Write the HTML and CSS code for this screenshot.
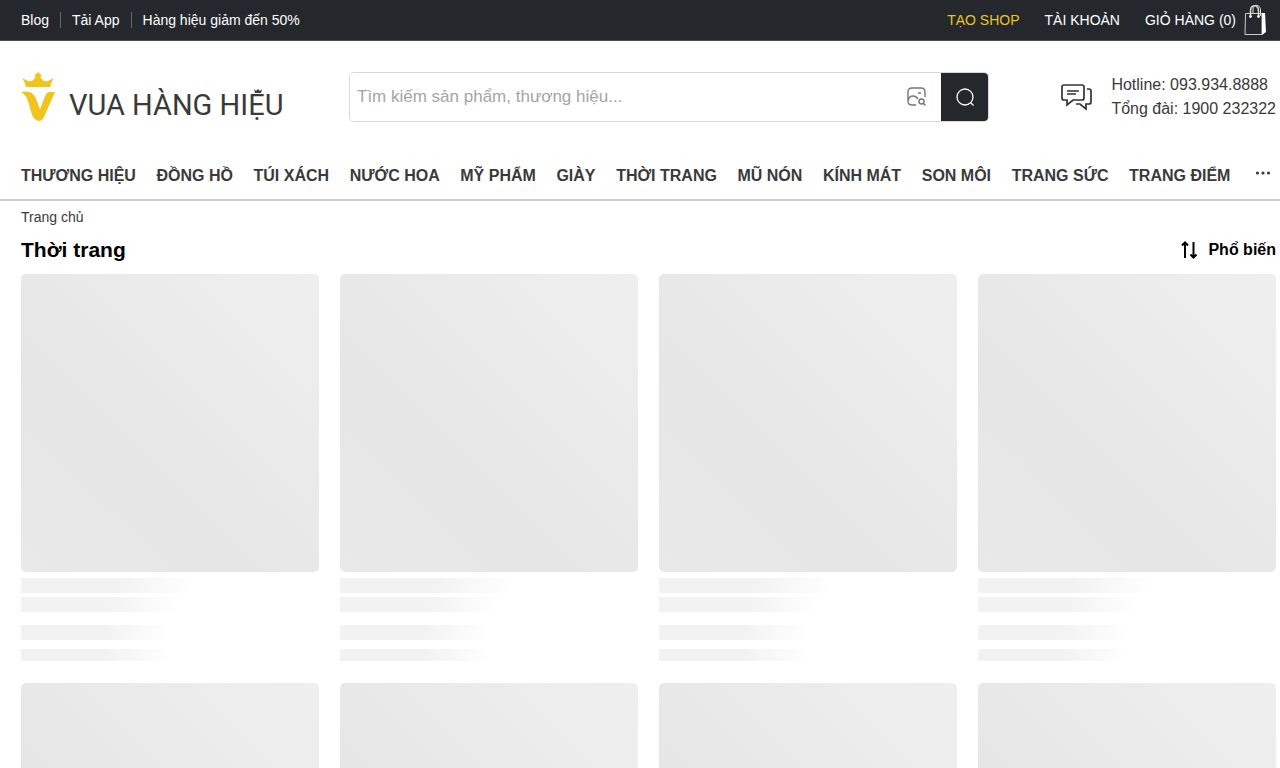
FILE: index.html
```html
<!DOCTYPE html>
<html lang="vi">
<head>
    <meta charset="UTF-8">
    <title>Thời trang - Vua Hàng Hiệu</title>
    <link rel="stylesheet" href="styles.css">
</head>
<body>

<div class="topbar">
    <div class="top-left">
        <a href="#">Blog</a>
        <a href="#">Tải App</a>
        <a href="#">Hàng hiệu giảm đến 50%</a>
    </div>
    <div class="top-right">
        <a href="#" class="shop">TẠO SHOP</a>
        <a href="#">TÀI KHOẢN</a>
        <a href="#" class="cart">GIỎ HÀNG (0)
            <svg width="23" height="32" viewBox="0 0 23 32" fill="none" stroke="#fff">
                <path d="M1.500 9.500H18V30.500H1Z" stroke="#ccc"/>
                <path d="M18 9H21L22 28L18 31Z" fill="#fff" stroke="none"/>
                <path d="M6.500 12V7C6.500 0 14.500 0 14.500 7V12" stroke="#ddd" stroke-width="1.500"/>
                <path d="M9 9V5C9 0 16.500 0 16.500 6V12" stroke="#ddd"/>
                <circle cx="6.500" cy="12.500" r="1" fill="#fff"/>
                <circle cx="14.500" cy="12.500" r="1" fill="#fff"/>
            </svg>
        </a>
    </div>
</div>

<header class="header">
    <a href="#" class="logo">
        <svg width="34" height="50" viewBox="0 0 34 50" fill="#efc51d">
            <path d="M1 6L7 9Q11 10 13 7L15 5L13 4L17 0L21 4L19 5L21 7Q23 10 27 9L33 6Q30 10 29 15H5Q4 10 1 6Z"/>
            <path d="M0 20Q4 19 8 20Q13 21 15 27L19 37L25 22Q26 20 29 20H34L23 45Q21 49 18 49Q13 48 11 43L7 29Q5 23 0 20Z"/>
        </svg>
        <span class="brand">VUA HÀNG HI<span class="crown-e">Ẹ<svg width="8" height="5" viewBox="0 0 8 5" fill="#3a3a3a"><path d="M0 0L2 2L4 0L6 2L8 0L7 4H1Z"/></svg></span>U</span>
    </a>
    <form class="search">
        <input type="text" aria-label="Tìm kiếm" placeholder="Tìm kiếm sản phẩm, thương hiệu...">
        <button type="button" class="by-image" aria-label="Tìm bằng hình ảnh">
            <svg width="20" height="20" viewBox="0 0 20 20" fill="none" stroke="#777" stroke-width="1.400">
                <path d="M9 18H5Q1 18 1 14V5Q1 1 5 1H14Q18 1 18 5V10M1 14Q2 9 6 9Q9 9 11 12M11 6H14"/>
                <circle cx="14.500" cy="14.500" r="2.500"/>
                <path d="M16.500 16.500L18.500 18.500"/>
            </svg>
        </button>
        <button type="submit" class="go" aria-label="Tìm">
            <svg width="20" height="20" viewBox="0 0 20 20" fill="none" stroke="#fff" stroke-width="1.300">
                <circle cx="10" cy="10" r="8"/>
                <path d="M15.500 15.500L18.500 18.500"/>
            </svg>
        </button>
    </form>
    <div class="contact">
        <svg width="31" height="28" viewBox="0 0 31 28" fill="none" stroke="#333" stroke-width="1.700">
            <path d="M3 2H21Q23 2 23 4V15Q23 17 21 17H12L6 22V17H3Q1 17 1 15V4Q1 2 3 2Z"/>
            <path d="M6 8H18M6 11H15"/>
            <path d="M26 6H28Q30 6 30 8V19Q30 21 28 21H25V26L19 21H15"/>
        </svg>
        <div>
            <a href="#">Hotline: 093.934.8888</a>
            <a href="#">Tổng đài: 1900 232322</a>
        </div>
    </div>
</header>

<nav class="menu">
    <a href="#">THƯƠNG HIỆU</a>
    <a href="#">ĐỒNG HỒ</a>
    <a href="#">TÚI XÁCH</a>
    <a href="#">NƯỚC HOA</a>
    <a href="#">MỸ PHẨM</a>
    <a href="#">GIÀY</a>
    <a href="#">THỜI TRANG</a>
    <a href="#">MŨ NÓN</a>
    <a href="#">KÍNH MÁT</a>
    <a href="#">SON MÔI</a>
    <a href="#">TRANG SỨC</a>
    <a href="#">TRANG ĐIỂM</a>
    <button type="button" class="more" aria-label="Xem thêm">
        <svg width="16" height="4" viewBox="0 0 16 4" fill="#3a3a3a"><circle cx="2.500" cy="2" r="1.600"/><circle cx="8" cy="2" r="1.600"/><circle cx="13.500" cy="2" r="1.600"/></svg>
    </button>
</nav>

<main class="content">
    <a href="#" class="crumb">Trang chủ</a>
    <div class="heading">
        <h1>Thời trang</h1>
        <button type="button" class="sort">
            <svg width="17" height="18" viewBox="0 0 17 18" fill="none" stroke="#000" stroke-width="2">
                <path d="M4 17V1M1 4.500L4 1.500L7 4.500"/>
                <path d="M12.500 1V17M9.500 13.500L12.500 16.500L15.500 13.500"/>
            </svg>
            Phổ biến
        </button>
    </div>
    <div class="grid">
        <div class="card"><div class="thumb"></div><div class="line"></div><div class="line second"></div><div class="line price"></div><div class="line small"></div></div>
        <div class="card"><div class="thumb"></div><div class="line"></div><div class="line second"></div><div class="line price"></div><div class="line small"></div></div>
        <div class="card"><div class="thumb"></div><div class="line"></div><div class="line second"></div><div class="line price"></div><div class="line small"></div></div>
        <div class="card"><div class="thumb"></div><div class="line"></div><div class="line second"></div><div class="line price"></div><div class="line small"></div></div>
        <div class="card"><div class="thumb"></div></div>
        <div class="card"><div class="thumb"></div></div>
        <div class="card"><div class="thumb"></div></div>
        <div class="card"><div class="thumb"></div></div>
    </div>
</main>

</body>
</html>
```
FILE: styles.css
```css
*{box-sizing:border-box;}

html{scrollbar-width:none;}

body{margin:0;font-family:"Liberation Sans",Arial,sans-serif;color:#3a3a3a;background:#fff;}

a{color:inherit;text-decoration:none;}

button{border:0;padding:0;background:none;font:inherit;color:inherit;cursor:pointer;}

svg{display:block;flex:none;}

/* top bar */
.topbar{display:flex;justify-content:space-between;align-items:center;height:41px;padding:0 13px 0 21px;
    background:#24282d;border-bottom:1px solid #4a4d50;color:#fff;font-size:14px;}
.top-left{display:flex;}
.top-left a{padding-right:11px;line-height:16px;}
.top-left a + a{border-left:1px solid #66696c;padding-left:11px;}
.top-right{display:flex;align-items:center;gap:25px;}
.shop{color:#efc51d;}
.cart{display:flex;align-items:center;gap:8px;}

/* header */
.header{display:flex;align-items:center;height:111px;padding:0 4px 0 21px;}
.logo{display:flex;align-items:center;gap:14px;width:328px;}
.brand{font-family:Roboto,sans-serif;font-size:29px;line-height:36px;padding-top:16px;white-space:nowrap;}
.crown-e{position:relative;}
.crown-e svg{position:absolute;left:6px;top:1px;}
.search{display:flex;flex:1;max-width:640px;height:50px;border:1px solid #d8d8d8;border-radius:5px;overflow:hidden;}
.search input{flex:1;min-width:0;border:0;padding:0 7px;outline:0;font:17px "Liberation Sans",Arial,sans-serif;}
.search input::placeholder{color:#a5a5a5;}
.by-image{padding:0 14px;}
.go{display:flex;align-items:center;justify-content:center;width:47px;background:#24282d;}
.contact{display:flex;align-items:center;gap:19px;margin-left:auto;font-size:16px;line-height:24px;white-space:nowrap;}
.contact a{display:block;}

/* menu */
.menu{display:flex;align-items:center;justify-content:space-between;height:49px;padding:0 9px 0 21px;
    border-bottom:2px solid #ccc;font-size:16px;font-weight:bold;white-space:nowrap;}
.more{padding:0 0 6px 4px;}

/* product list */
.content{padding:8px 4px 0 21px;}
.crumb{display:block;font-size:14px;line-height:16px;}
.heading{display:flex;align-items:center;justify-content:space-between;height:49px;color:#000;}
.heading h1{margin:0;font-size:21px;}
.sort{display:flex;align-items:center;gap:10px;font-size:16px;font-weight:bold;}
.grid{display:grid;grid-template-columns:repeat(4,1fr);gap:22px 21px;}
.thumb{aspect-ratio:1;margin-bottom:6px;border-radius:5px;background:linear-gradient(45deg,#e9e9e9,#e6e6e6 35%,#efefef);}
.line{width:58%;height:15px;background:linear-gradient(90deg,#f2f2f2 55%,#fff);}
.second{width:53%;margin-top:4px;}
.price{width:50%;margin-top:13px;}
.small{width:50%;height:12px;margin-top:9px;}
```
